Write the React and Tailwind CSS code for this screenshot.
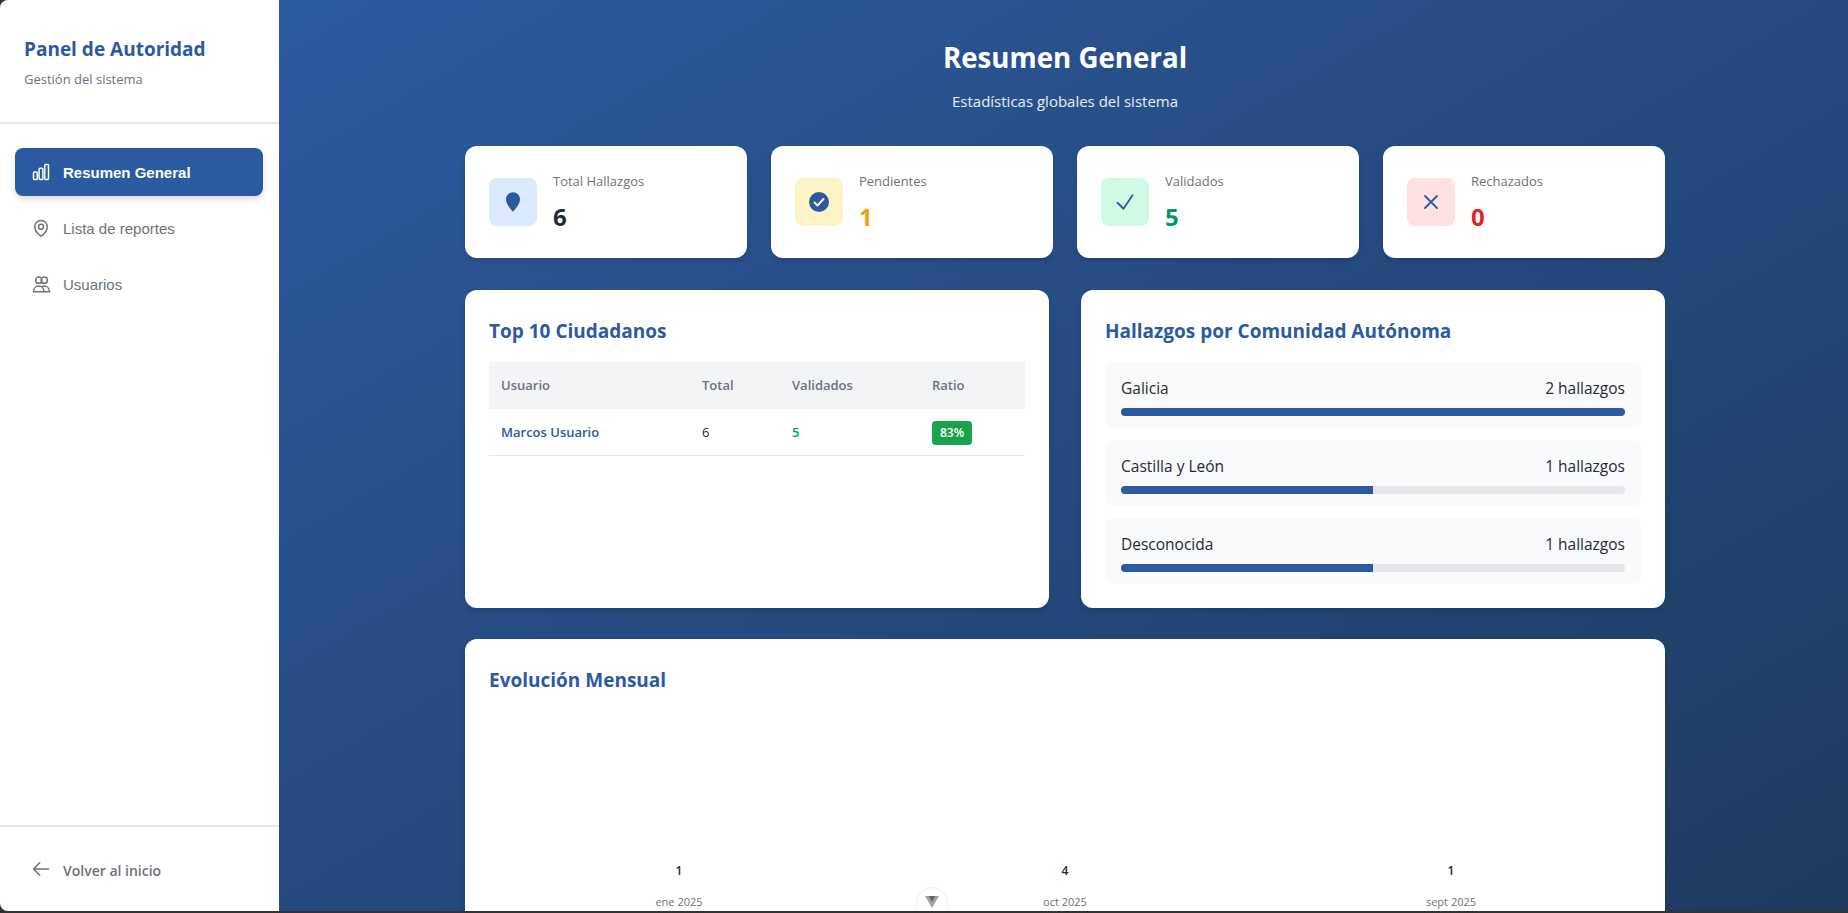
import React from "react";
import { HiOutlineChartBar, HiOutlineMapPin, HiOutlineArrowLeft, HiOutlineCheck, HiOutlineXMark } from "react-icons/hi2";

const seg = "font-['Open_Sans','Noto_Sans',sans-serif]";
const stats = [
  { label: "Total Hallazgos", value: "6", bg: "bg-[#dbeafe]", color: "text-[#1f2937]", icon: "pin" },
  { label: "Pendientes", value: "1", bg: "bg-[#fef3c7]", color: "text-[#f59e0b]", icon: "circle" },
  { label: "Validados", value: "5", bg: "bg-[#d1fae5]", color: "text-[#059669]", icon: "check" },
  { label: "Rechazados", value: "0", bg: "bg-[#fee2e2]", color: "text-[#dc2626]", icon: "x" },
];
const regions = [
  { name: "Galicia", text: "2 hallazgos", pct: 100 },
  { name: "Castilla y León", text: "1 hallazgos", pct: 50 },
  { name: "Desconocida", text: "1 hallazgos", pct: 50 },
];
const months = [
  { v: "1", m: "ene 2025" },
  { v: "4", m: "oct 2025" },
  { v: "1", m: "sept 2025" },
];

function UsersIcon({ size }) {
  return (
    <svg width={size} height={size} viewBox="0 0 24 24" fill="none" stroke="currentColor" strokeWidth="1.8" strokeLinejoin="round" strokeLinecap="round">
      <circle cx="8.500" cy="6.500" r="4" />
      <circle cx="15.500" cy="6.500" r="4" />
      <path d="M2 21c0-4 2.700-7 6.500-7s6.500 3 6.500 7" />
      <path d="M13.500 14.200c.6-.13 1.300-.2 2-.2 3.800 0 6.500 3 6.500 7" />
      <path d="M2 21.200h20" />
    </svg>
  );
}

function StatIcon({ kind }) {
  if (kind === "pin")
    return (
      <svg width="24" height="24" viewBox="0 0 24 24" fill="#2c5aa0">
        <path d="M12 2.300c-3.900 0-7 3-7 7 0 4.500 4.500 10 7 12.400 2.500-2.400 7-7.900 7-12.400 0-4-3.100-7-7-7z" />
      </svg>
    );
  if (kind === "circle")
    return (
      <svg width="24" height="24" viewBox="0 0 24 24" fill="none">
        <circle cx="12" cy="12" r="10" fill="#2c5aa0" />
        <path d="M7.500 12.500l3 3 6-6.500" stroke="#fef3c7" strokeWidth="2" strokeLinecap="round" strokeLinejoin="round" />
      </svg>
    );
  if (kind === "check") return <HiOutlineCheck size={24} strokeWidth={1.8} className="text-[#2c5aa0]" />;
  return <HiOutlineXMark size={24} strokeWidth={1.8} className="text-[#2c5aa0]" />;
}

function NavItem({ icon: Icon, label, active, size }) {
  return (
    <div
      className={
        "flex h-12 items-center gap-[10px] rounded-lg px-[14px] font-['Liberation_Sans',sans-serif] text-[15px] " +
        (active
          ? "bg-[#2c5aa0] font-bold text-white shadow-[0_4px_6px_-1px_rgba(0,0,0,0.15)]"
          : "text-[#6b7280]")
      }
    >
      <span className="flex w-6 justify-center">
        <Icon size={size} strokeWidth={1.8} />
      </span>
      <span className="block pt-[2px]">{label}</span>
    </div>
  );
}

export default function App() {
  return (
    <div className="h-[913px] overflow-hidden bg-[#333333]">
      <div className={"flex h-[911px] overflow-hidden rounded-bl-[8px] rounded-tl-[8px] bg-[#2c5aa0] " + seg}>
        <aside className="flex h-full w-[279px] shrink-0 flex-col bg-white">
          <div className="h-[124px] shrink-0 border-b-2 border-[#e5e7eb] px-6 pt-[36px]">
            <h2 className="text-[19px] leading-[27px] font-bold text-[#2c5aa0]">Panel de Autoridad</h2>
            <p className="mt-[7px] text-[13px] leading-[18px] text-[#6b7280]">Gestión del sistema</p>
          </div>
          <nav className="flex flex-1 flex-col gap-2 pt-6 pr-[16px] pl-[15px]">
            <NavItem icon={HiOutlineChartBar} label="Resumen General" size={20} active />
            <NavItem icon={HiOutlineMapPin} label="Lista de reportes" size={20} />
            <NavItem icon={UsersIcon} label="Usuarios" size={19} />
          </nav>
          <div className="flex h-[86px] shrink-0 items-center gap-[10px] border-t-2 border-[#e5e7eb] pl-[29px] text-[14px] font-semibold text-[#6b7280]">
            <span className="flex w-6 justify-center">
              <HiOutlineArrowLeft size={20} strokeWidth={1.8} />
            </span>
            <span className="block pt-[2px]">Volver al inicio</span>
          </div>
        </aside>
        <main className="relative min-w-0 flex-1 overflow-hidden bg-gradient-to-br from-[#2c5aa0] to-[#1e3a5f] pl-[186px]">
          <div className="w-[1200px] pt-[38px]">
            <div className="text-center">
              <h1 className="text-[27.7px] leading-[38px] font-bold text-white">Resumen General</h1>
              <p className="mt-[15px] text-[15px] leading-[20px] text-white/90">Estadísticas globales del sistema</p>
            </div>
            <div className="mt-[35px] grid grid-cols-4 gap-6">
              {stats.map((s) => (
                <div key={s.label} className="flex h-28 items-center gap-4 rounded-xl bg-white px-6 shadow-md">
                  <div className={"flex h-12 w-12 items-center justify-center rounded-lg " + s.bg}>
                    <StatIcon kind={s.icon} />
                  </div>
                  <div className="pt-[2px]">
                    <div className="text-[13px] leading-[20px] text-[#6b7280]">{s.label}</div>
                    <div className={"mt-[8px] text-[24px] leading-[36px] font-bold " + s.color}>{s.value}</div>
                  </div>
                </div>
              ))}
            </div>
            <div className="mt-8 grid h-[317px] grid-cols-2 gap-8">
              <section className="rounded-xl bg-white p-6 shadow-md">
                <h3 className="pt-1 text-[19px] leading-[26px] font-bold text-[#2c5aa0]">Top 10 Ciudadanos</h3>
                <table className="mt-[18px] w-full table-fixed text-[13px]">
                  <thead>
                    <tr className="h-[47px] bg-[#f3f4f6] text-left text-[#6b7280]">
                      <th className="w-[201px] pl-3 font-semibold">Usuario</th>
                      <th className="w-[90px] pl-3 font-semibold">Total</th>
                      <th className="w-[140px] pl-3 font-semibold">Validados</th>
                      <th className="pl-3 font-semibold">Ratio</th>
                    </tr>
                  </thead>
                  <tbody>
                    <tr className="h-[46px] border-b border-[#e5e7eb]">
                      <td className="pt-[2px] pl-3 font-semibold text-[#2c5aa0]">Marcos Usuario</td>
                      <td className="pt-[2px] pl-3 text-[#1f2937]">6</td>
                      <td className="pt-[2px] pl-3 font-semibold text-[#059669]">5</td>
                      <td className="pt-[2px] pl-3">
                        <span className="inline-flex h-6 w-10 items-center justify-center rounded bg-[#16a34a] text-[12px] font-semibold text-white">83%</span>
                      </td>
                    </tr>
                  </tbody>
                </table>
              </section>
              <section className="rounded-xl bg-white p-6 shadow-md">
                <h3 className="pt-1 text-[19px] leading-[26px] font-bold text-[#2c5aa0]">Hallazgos por Comunidad Autónoma</h3>
                <div className="mt-[18px] flex flex-col gap-3">
                  {regions.map((r) => (
                    <div key={r.name} className="h-[66px] rounded-lg bg-[#f9fafb] px-4 pt-[16px]">
                      <div className="flex justify-between text-[15.5px] leading-[20px] font-medium text-[#1f2937]">
                        <span>{r.name}</span>
                        <span>{r.text}</span>
                      </div>
                      <div className="mt-[10px] h-2 overflow-hidden rounded-full bg-[#e5e7eb]">
                        <div className="h-full bg-[#2c5aa0]" style={{ width: r.pct + "%" }} />
                      </div>
                    </div>
                  ))}
                </div>
              </section>
            </div>
            <section className="mt-8 h-[400px] rounded-xl bg-white p-6 shadow-md">
              <h3 className="pt-1 text-[19px] leading-[26px] font-bold text-[#2c5aa0]">Evolución Mensual</h3>
              <div className="mt-[170px] grid grid-cols-[386px_386px_386px] justify-center">
                {months.map((m) => (
                  <div key={m.m} className="text-center">
                    <div className="text-[12px] leading-[16px] font-semibold text-[#1f2937]">{m.v}</div>
                    <div className="mt-[15px] text-[11px] leading-[16px] text-[#6b7280]">{m.m}</div>
                  </div>
                ))}
              </div>
            </section>
          </div>
          <div className="absolute top-[887px] left-[637px] flex h-8 w-8 justify-center rounded-full border border-[#eeeeee] bg-white pt-[8px]">
            <svg width="14" height="12" viewBox="0 0 14 12">
              <path d="M0 0h14L7 12z" fill="#a3a3a3" />
              <path d="M3.500 0h7L7 6z" fill="#666666" />
            </svg>
          </div>
        </main>
      </div>
    </div>
  );
}
